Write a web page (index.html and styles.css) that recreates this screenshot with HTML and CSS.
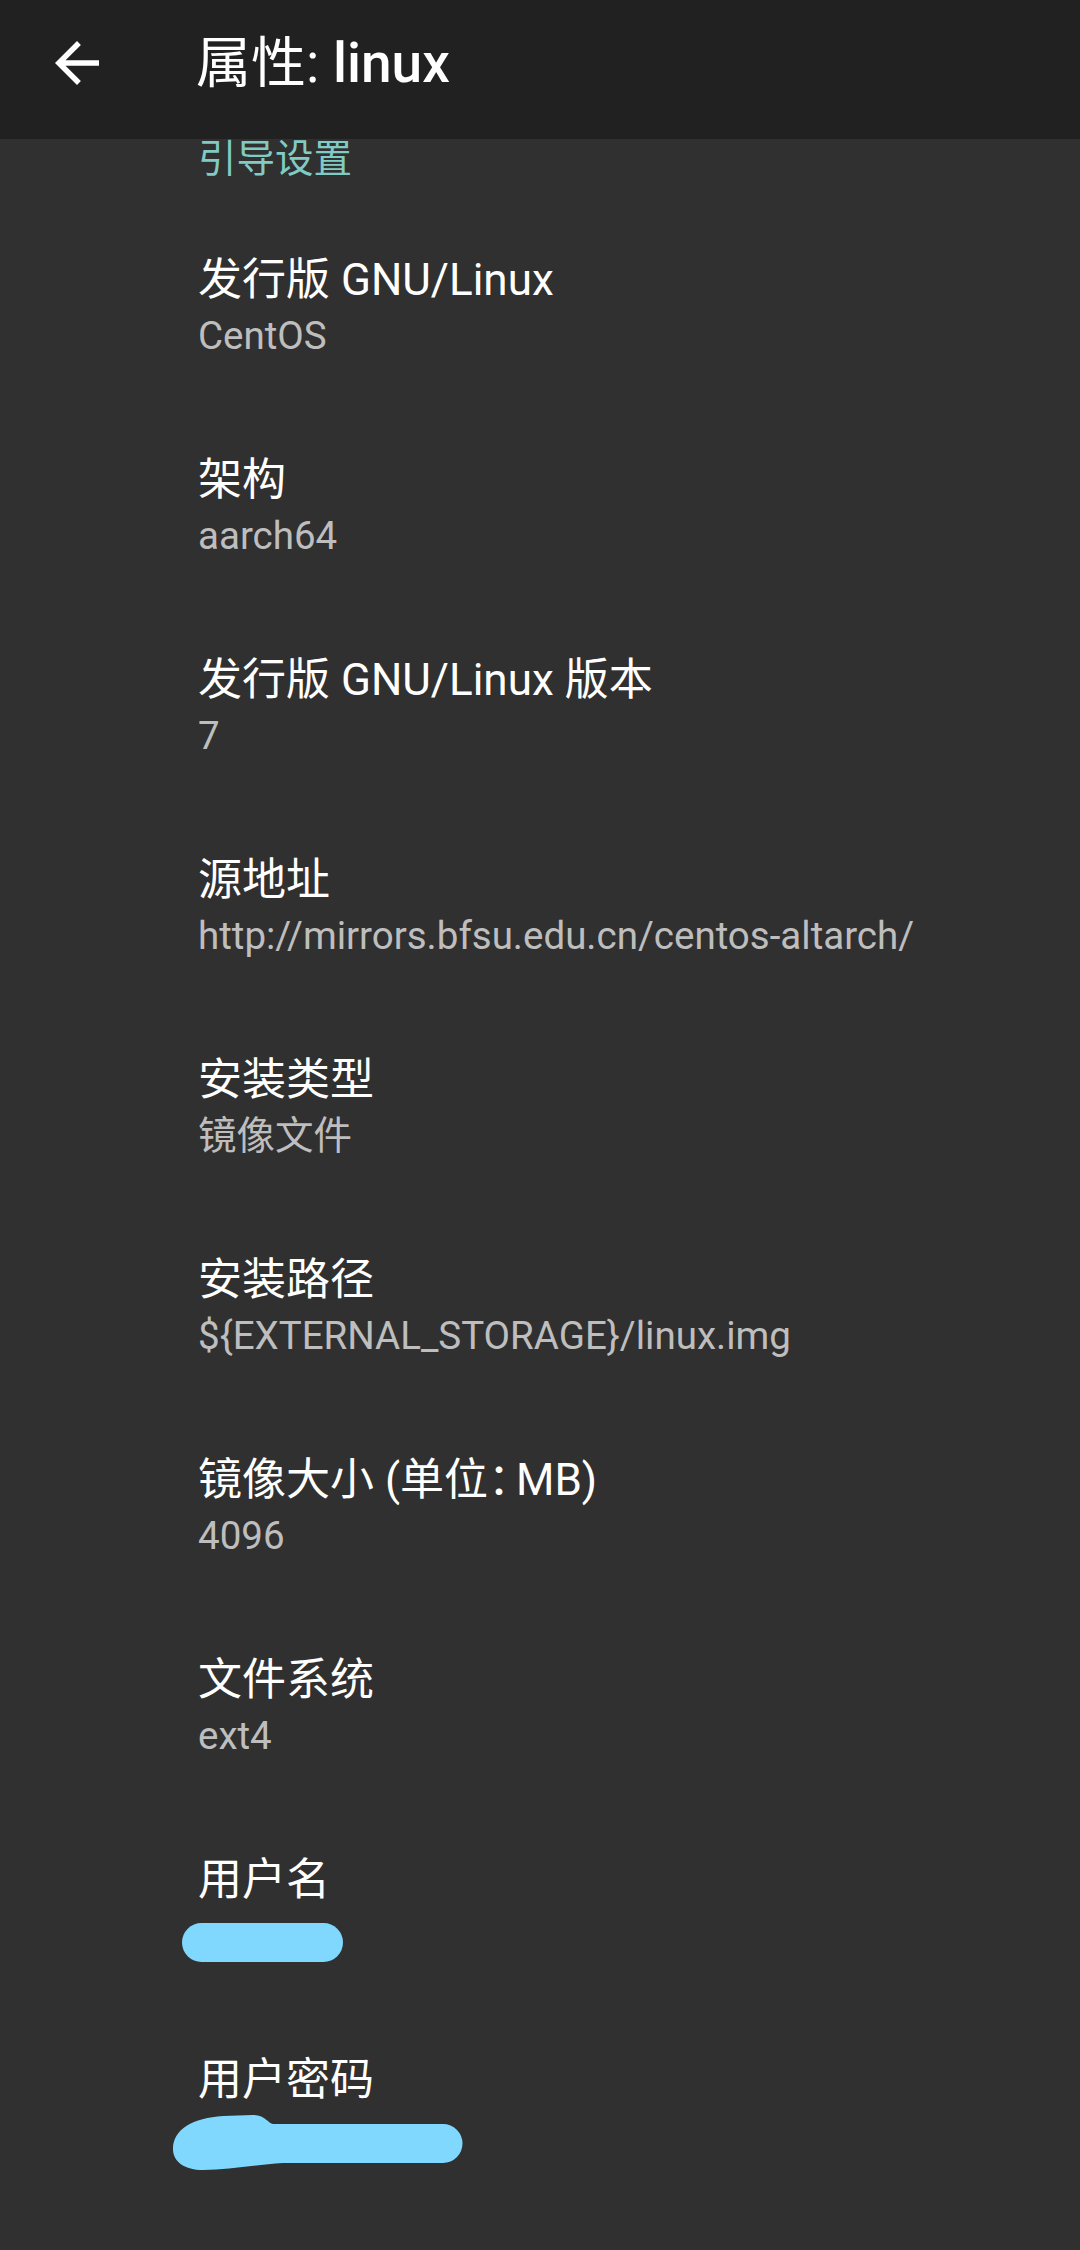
FILE: index.html
```html
<!DOCTYPE html>
<html lang="zh-CN">
<head>
<meta charset="utf-8">
<title>属性: linux</title>
<link rel="stylesheet" href="styles.css">
</head>
<body>
<header class="toolbar">
  <button class="nav-btn" aria-label="返回">
    <svg viewBox="0 0 24 24" width="66" height="66"><path fill="#ffffff" d="M20 11H7.83l5.59-5.59L12 4l-8 8 8 8 1.41-1.41L7.83 13H20v-2z"/></svg>
  </button>
  <h1 class="toolbar-title"><span class="cjk">属性: </span><span class="name">linux</span></h1>
</header>
<main class="list">
  <div class="category">引导设置</div>
  <div class="pref"><div class="pref-title">发行版 GNU/Linux</div><div class="pref-summary">CentOS</div></div>
  <div class="pref"><div class="pref-title">架构</div><div class="pref-summary">aarch64</div></div>
  <div class="pref"><div class="pref-title">发行版 GNU/Linux 版本</div><div class="pref-summary">7</div></div>
  <div class="pref"><div class="pref-title">源地址</div><div class="pref-summary">http://mirrors.bfsu.edu.cn/centos-altarch/</div></div>
  <div class="pref"><div class="pref-title">安装类型</div><div class="pref-summary">镜像文件</div></div>
  <div class="pref"><div class="pref-title">安装路径</div><div class="pref-summary">${EXTERNAL_STORAGE}/linux.img</div></div>
  <div class="pref"><div class="pref-title">镜像大小 (单位<span class="fw-colon">：</span>MB)</div><div class="pref-summary">4096</div></div>
  <div class="pref"><div class="pref-title">文件系统</div><div class="pref-summary">ext4</div></div>
  <div class="pref"><div class="pref-title">用户名</div><div class="pref-summary redacted">
    <svg class="mask mask-user" viewBox="0 0 161 39" width="161" height="39"><rect x="0" y="0" width="161" height="39" rx="19.5" fill="#80d8ff"/></svg>
  </div></div>
  <div class="pref"><div class="pref-title">用户密码</div><div class="pref-summary redacted">
    <svg class="mask mask-pass" viewBox="0 0 290 56" width="290" height="56"><path fill="#80d8ff" d="M0 34C0 14 20 3 50 1L80 0C92 0 96 9 100 9L270 9A19.5 19.5 0 0 1 270 48L110 48C80 50 55 55 30 55C12 55 0 47 0 34Z"/></svg>
  </div></div>
</main>
</body>
</html>
```

FILE: styles.css
```css
html, body {
  margin: 0;
  padding: 0;
  background: #303030;
}
body {
  width: 1080px;
  min-height: 2250px;
  font-family: Roboto, "Noto Sans CJK SC", sans-serif;
  color: #ffffff;
}
.toolbar {
  height: 139px;
  background: #212121;
  display: flex;
  align-items: center;
  padding-bottom: 14px;
  box-sizing: border-box;
}
.nav-btn {
  width: 66px;
  height: 66px;
  margin-left: 44px;
  padding: 0;
  border: 0;
  background: transparent;
  display: flex;
}
.toolbar-title {
  margin: 0 0 0 86px;
  font-size: 55px;
  line-height: 66px;
  font-weight: 400;
  color: #ffffff;
  white-space: pre;
}
.toolbar-title .name {
  font-weight: 500;
}
.list {
  display: flex;
  flex-direction: column;
}
.category {
  padding: 0 0 29px 198px;
  font-size: 38.5px;
  line-height: 39px;
  color: #80cbc4;
}
.pref {
  padding: 44px 40px 44px 198px;
  height: 200px;
  box-sizing: border-box;
}
.pref-title {
  font-size: 44px;
  line-height: 58px;
  height: 58px;
  color: #ffffff;
  white-space: nowrap;
}
.fw-colon {
  font-family: "Noto Sans CJK JP", sans-serif;
  font-feature-settings: "halt";
  line-height: 0;
  padding-right: 6px;
}
.pref-summary {
  font-size: 38.5px;
  line-height: 54px;
  height: 54px;
  color: rgba(255, 255, 255, 0.7);
  white-space: nowrap;
}
.redacted {
  position: relative;
}
.mask {
  position: absolute;
  display: block;
}
.mask-user {
  left: -16px;
  top: 14px;
}
.mask-pass {
  left: -25px;
  top: 6px;
}
```
